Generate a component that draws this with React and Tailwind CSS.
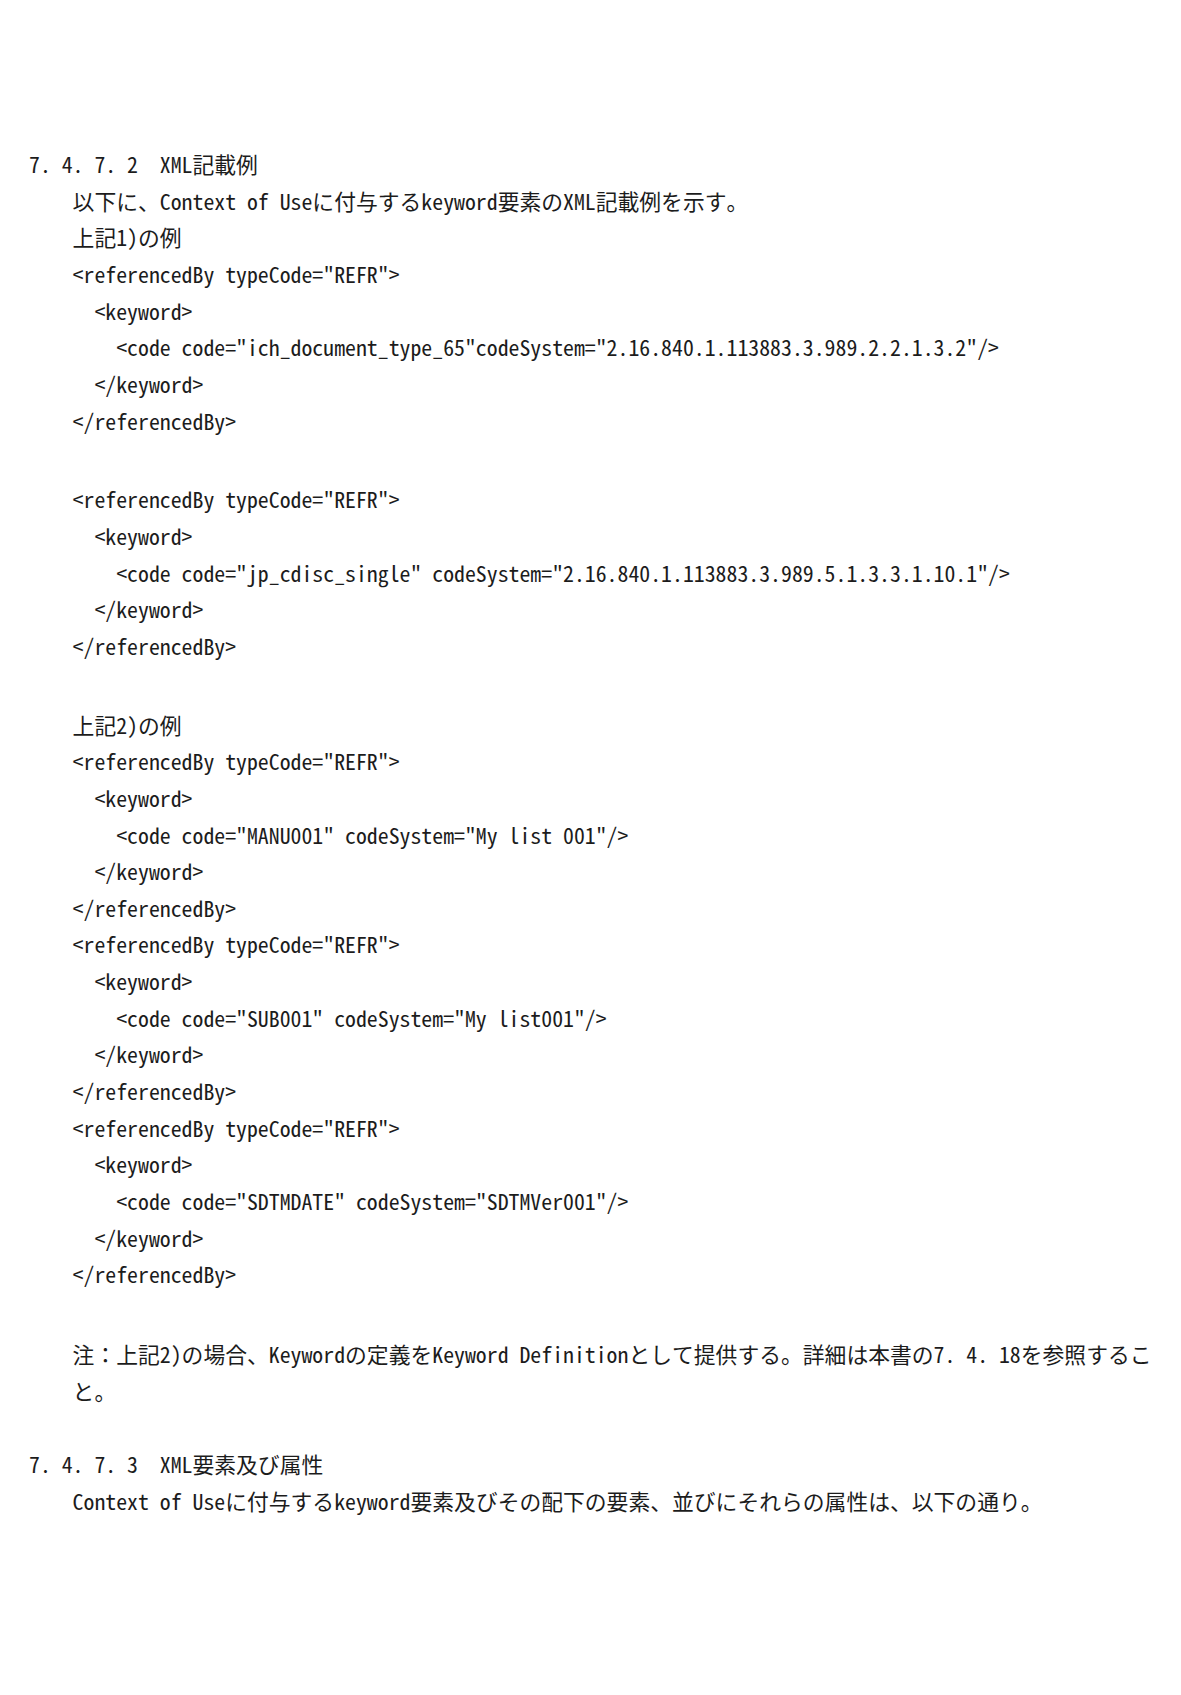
import React from "react";

const pad = ["pl-0", "pl-[21.8px]", "pl-[43.6px]"];

function Line({ indent = 0, children }) {
  return <div className={`${pad[indent]} h-[36.67px] whitespace-pre`}>{children}</div>;
}

function Gap({ big = true }) {
  return <div className={big ? "h-[42px]" : "h-[36.67px]"} />;
}

function RefBlock({ code }) {
  return (
    <>
      <Line>{'<referencedBy typeCode="REFR">'}</Line>
      <Line indent={1}>{"<keyword>"}</Line>
      <Line indent={2}>{code}</Line>
      <Line indent={1}>{"</keyword>"}</Line>
      <Line>{"</referencedBy>"}</Line>
    </>
  );
}

export default function App() {
  return (
    <div className="min-h-[1695px] w-full bg-white text-[#1c1c1c] font-light pt-[146px] pl-[29px] font-['Noto_Sans_Mono_CJK_JP','Noto_Sans_CJK_JP',monospace] text-[21.8px] leading-[36.67px]">
      <Line>{"7. 4. 7. 2  XML記載例"}</Line>
      <div className="pl-[43.6px]">
        <Line>以下に、Context of Useに付与するkeyword要素のXML記載例を示す。</Line>
        <Line>上記1)の例</Line>
        <RefBlock code={'<code code="ich_document_type_65"codeSystem="2.16.840.1.113883.3.989.2.2.1.3.2"/>'} />
        <Gap />
        <RefBlock code={'<code code="jp_cdisc_single" codeSystem="2.16.840.1.113883.3.989.5.1.3.3.1.10.1"/>'} />
        <Gap />
        <Line>上記2)の例</Line>
        <RefBlock code={'<code code="MANU001" codeSystem="My list 001"/>'} />
        <RefBlock code={'<code code="SUB001" codeSystem="My list001"/>'} />
        <RefBlock code={'<code code="SDTMDATE" codeSystem="SDTMVer001"/>'} />
        <div className="h-[43px]" />
        <Line>注：上記2)の場合、Keywordの定義をKeyword Definitionとして提供する。詳細は本書の7. 4. 18を参照するこ</Line>
        <Line>と。</Line>
      </div>
      <Gap big={false} />
      <Line>{"7. 4. 7. 3  XML要素及び属性"}</Line>
      <div className="pl-[43.6px]">
        <Line>Context of Useに付与するkeyword要素及びその配下の要素、並びにそれらの属性は、以下の通り。</Line>
      </div>
    </div>
  );
}
